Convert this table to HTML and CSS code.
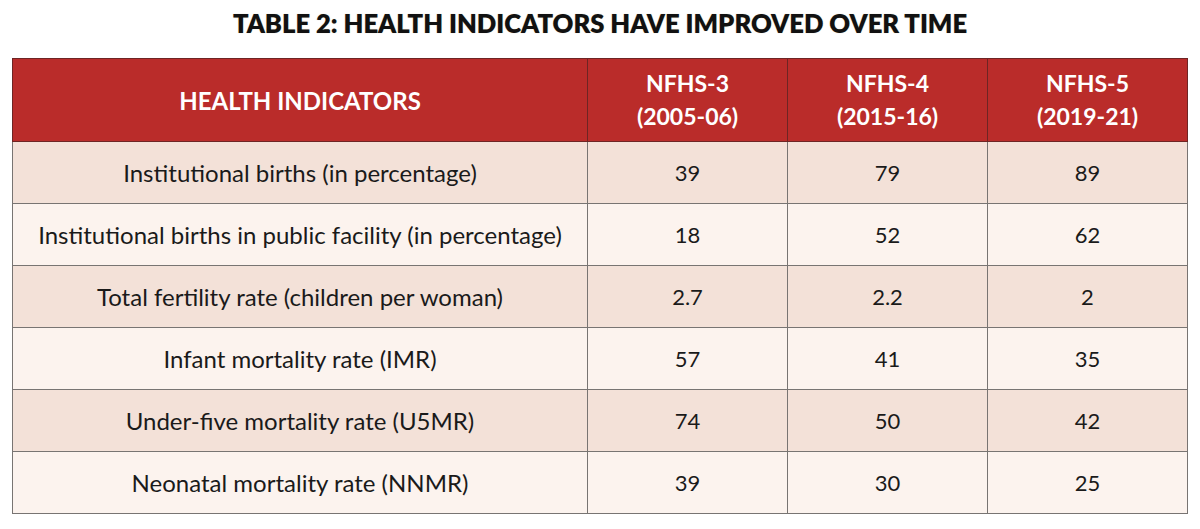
FILE: index.html
```html
<!DOCTYPE html>
<html lang="en">
<head>
<meta charset="utf-8">
<title>Table 2: Health indicators have improved over time</title>
<link rel="stylesheet" href="styles.css">
</head>
<body>
<div class="page">
  <h1 class="title">TABLE 2: HEALTH INDICATORS HAVE IMPROVED OVER TIME</h1>
  <table class="data">
    <colgroup>
      <col class="c-label">
      <col class="c-num">
      <col class="c-num">
      <col class="c-num">
    </colgroup>
    <thead>
      <tr>
        <th class="h-label">HEALTH INDICATORS</th>
        <th>NFHS-3<br>(2005-06)</th>
        <th>NFHS-4<br>(2015-16)</th>
        <th>NFHS-5<br>(2019-21)</th>
      </tr>
    </thead>
    <tbody>
      <tr class="odd"><td class="label">Institutional births (in percentage)</td><td>39</td><td>79</td><td>89</td></tr>
      <tr class="even"><td class="label">Institutional births in public facility (in percentage)</td><td>18</td><td>52</td><td>62</td></tr>
      <tr class="odd"><td class="label">Total fertility rate (children per woman)</td><td>2.7</td><td>2.2</td><td>2</td></tr>
      <tr class="even"><td class="label">Infant mortality rate (IMR)</td><td>57</td><td>41</td><td>35</td></tr>
      <tr class="odd"><td class="label">Under-five mortality rate (U5MR)</td><td>74</td><td>50</td><td>42</td></tr>
      <tr class="even"><td class="label">Neonatal mortality rate (NNMR)</td><td>39</td><td>30</td><td>25</td></tr>
    </tbody>
  </table>
</div>
</body>
</html>
```
FILE: styles.css
```css
html, body {
  margin: 0;
  padding: 0;
  background: #ffffff;
}
.page {
  padding: 7px 12px 0 12px;
  font-family: Lato, "Open Sans", sans-serif;
  color: #1a1a1a;
}
.title {
  margin: 0 0 18px 0;
  text-align: center;
  font-size: 25.6px;
  line-height: 33px;
  font-weight: 800;
  color: #111;
  text-shadow: 0 0 1px rgba(120, 90, 0, 0.35);
}
.data {
  width: 1176px;
  border-collapse: collapse;
  table-layout: fixed;
}
.c-label { width: 575px; }
.c-num { width: 200px; }
.data th {
  background: #ba2c2a;
  color: #fff;
  font-weight: 700;
  font-size: 23px;
  line-height: 33px;
  height: 82px;
  padding: 0;
  text-align: center;
  border: 1.5px solid #6e2524;
}
.data th.h-label {
  font-size: 24px;
}
.data td {
  height: 61px;
  padding: 0;
  text-align: center;
  font-size: 22px;
  border: 1.5px solid #787472;
}
.data td.label {
  font-size: 24px;
}
.odd td { background: #f3e1d8; }
.even td { background: #fcf3ee; }
```
